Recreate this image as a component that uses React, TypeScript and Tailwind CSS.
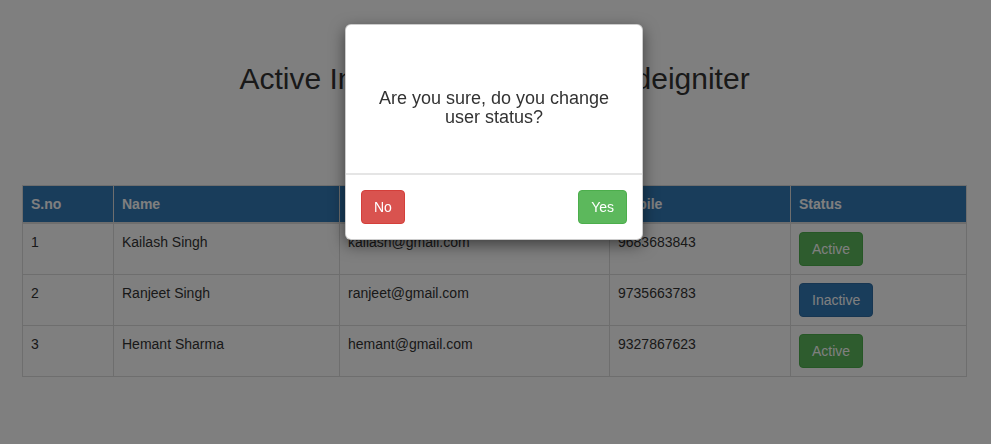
import React from "react"

type User = {
  id: number
  name: string
  email: string
  mobile: string
  active: boolean
}

const users: User[] = [
  { id: 1, name: "Kailash Singh", email: "kailash@gmail.com", mobile: "9683683843", active: true },
  { id: 2, name: "Ranjeet Singh", email: "ranjeet@gmail.com", mobile: "9735663783", active: false },
  { id: 3, name: "Hemant Sharma", email: "hemant@gmail.com", mobile: "9327867623", active: true },
]

const cols = "grid grid-cols-[91px_226px_270px_181px_176px]"
const cell = "border-r border-b border-[#ddd] px-2"

function StatusButton({ active }: { active: boolean }) {
  return active ? (
    <button className="h-[34px] rounded-[4px] border border-[#4cae4c] bg-[#5cb85c] px-3 text-sm leading-5 text-white">
      Active
    </button>
  ) : (
    <button className="h-[34px] rounded-[4px] border border-[#2e6da4] bg-[#337ab7] px-3 text-sm leading-5 text-white">
      Inactive
    </button>
  )
}

export default function App() {
  return (
    <div className="relative min-h-[444px] bg-white font-['Liberation_Sans',Arial,sans-serif] text-sm leading-5 text-[#333]">
      <div className="px-[22px] pt-[62px]">
        <h2 className="w-[945px] text-center text-[30px] leading-[33px] font-normal">
          Active Inactive Status with Codeigniter
        </h2>

        <div className="mt-[90px] w-[945px] border-l border-t border-[#ddd]">
          <div className={`${cols} bg-[#337ab7] font-bold text-white`}>
            {["S.no", "Name", "Email", "Mobile", "Status"].map((h) => (
              <div key={h} className="border-r border-b-2 border-[#ddd] px-2 py-2">
                {h}
              </div>
            ))}
          </div>
          {users.map((u) => (
            <div key={u.id} className={`${cols} h-[51px]`}>
              <div className={`${cell} py-2`}>{u.id}</div>
              <div className={`${cell} py-2`}>{u.name}</div>
              <div className={`${cell} py-2`}>{u.email}</div>
              <div className={`${cell} py-2`}>{u.mobile}</div>
              <div className={`${cell} py-2`}>
                <StatusButton active={u.active} />
              </div>
            </div>
          ))}
        </div>
      </div>

      {/* modal backdrop */}
      <div className="fixed inset-0 bg-black/50" />

      <div className="absolute left-[345px] top-[24px] w-[298px] rounded-[6px] border border-black/20 bg-white shadow-[0_5px_15px_rgba(0,0,0,0.5)]">
        <div className="h-[148px] px-[15px] pt-[64px] text-center text-[18px] leading-[19px] text-[#333]">
          Are you sure, do you change
          <br />
          user status?
        </div>
        <div className="flex items-center justify-between border-t-2 border-[#e5e5e5] p-[15px]">
          <button className="h-[34px] rounded-[4px] border border-[#d43f3a] bg-[#d9534f] px-3 text-sm leading-5 text-white">
            No
          </button>
          <button className="h-[34px] rounded-[4px] border border-[#4cae4c] bg-[#5cb85c] px-3 text-sm leading-5 text-white">
            Yes
          </button>
        </div>
      </div>
    </div>
  )
}
